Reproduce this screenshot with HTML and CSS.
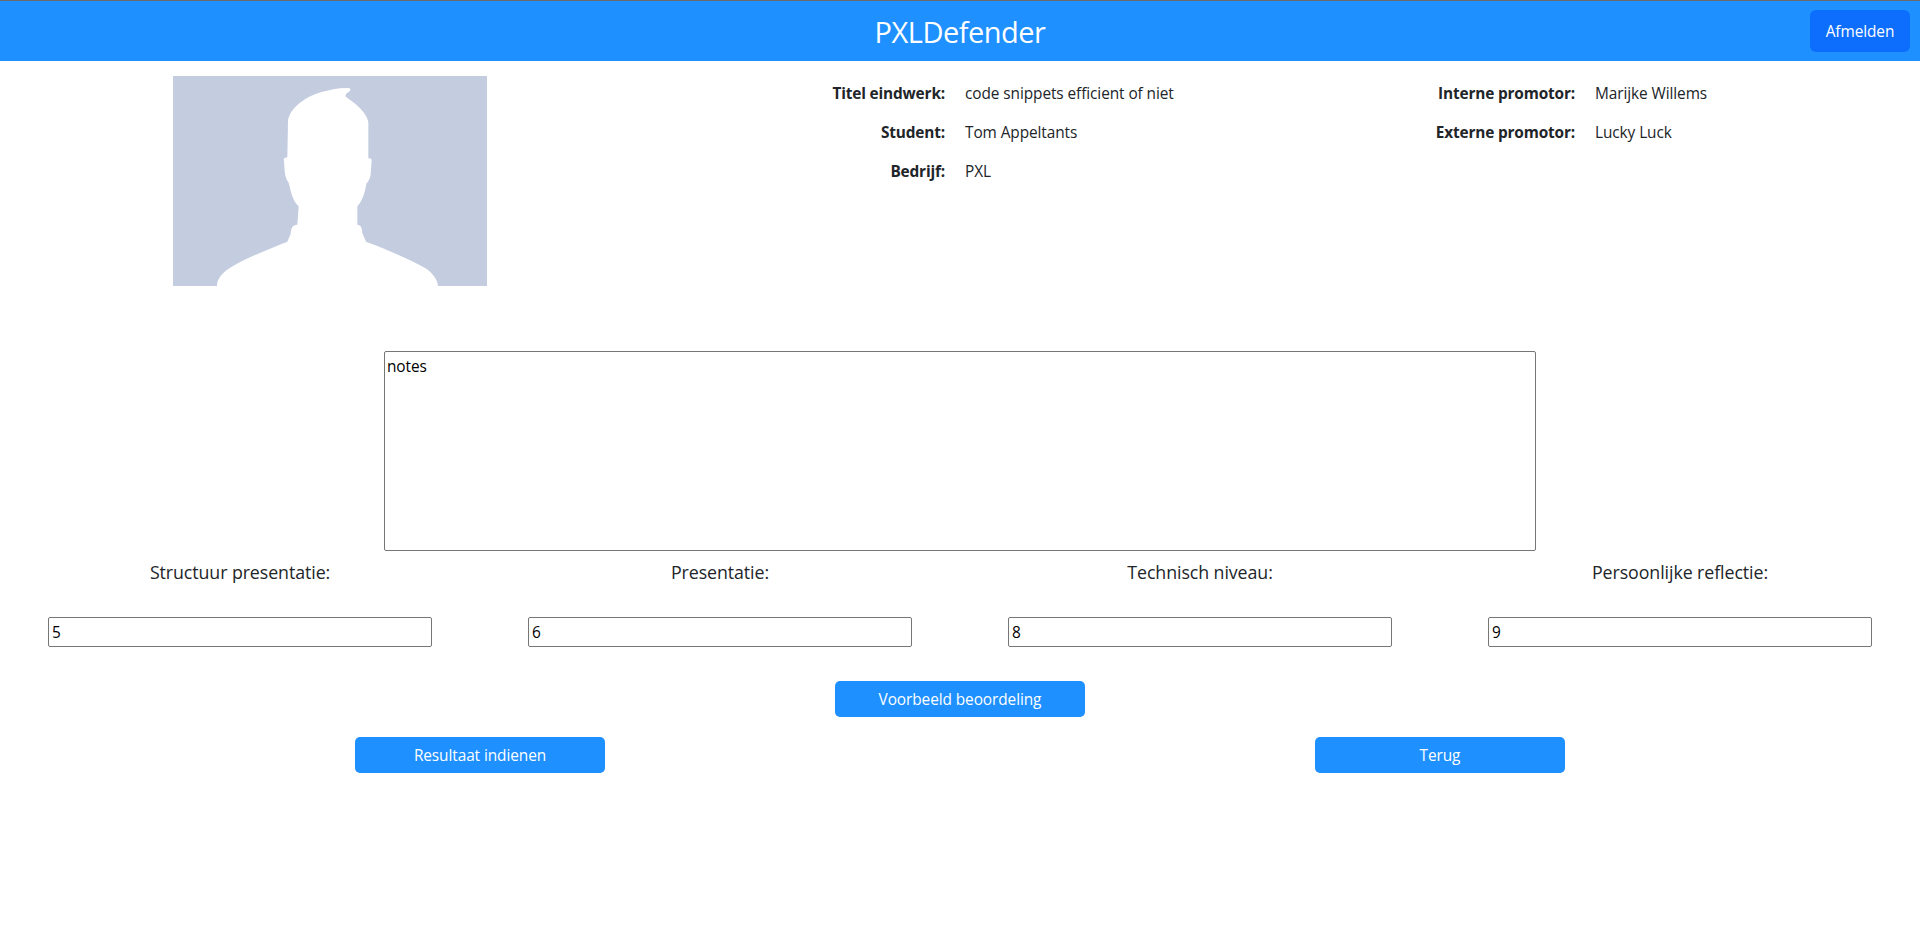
FILE: index.html
```html
<!DOCTYPE html>
<html lang="nl">
<head>
<meta charset="utf-8">
<title>PXLDefender</title>
<link rel="stylesheet" href="styles.css">
</head>
<body>
<header class="navbar">
  <h1 class="brand">PXLDefender</h1>
  <button class="logout" type="button">Afmelden</button>
</header>
<main>
  <section class="info">
    <div class="photo">
      <svg class="avatar" viewBox="39 48 942 630" role="img" aria-label="Student">
        <rect x="39" y="48" width="942" height="630" fill="#c4cce0"/>
        <path fill="#fff" d="M171 678C170 658 188 636 214 621C262 592 325 568 382 545L392 521C393 505 396 495 412 494L416 439C399 422 394 402 386 368C371 349 375 324 371 297Q374 292 382 292L384 184C388 145 436 110 482 97C508 89 538 83 565 84C572 85 573 89 569 93C563 99 554 102 557 110C587 130 622 159 625 187L625 295Q634 294 635 300L632 342C630 358 624 366 619 371C615 395 609 420 592 439L592 494C604 495 606 505 607 519L618 545C680 568 742 595 799 626C818 639 834 661 834 678Z"/>
      </svg>
    </div>
    <dl class="details">
      <dt>Titel eindwerk:</dt><dd>code snippets efficient of niet</dd>
      <dt>Student:</dt><dd>Tom Appeltants</dd>
      <dt>Bedrijf:</dt><dd>PXL</dd>
    </dl>
    <dl class="details">
      <dt>Interne promotor:</dt><dd>Marijke Willems</dd>
      <dt>Externe promotor:</dt><dd>Lucky Luck</dd>
    </dl>
  </section>
  <textarea class="notes" spellcheck="false">notes</textarea>
  <section class="scores">
    <div class="score"><label class="caption" for="s1">Structuur presentatie:</label><input class="field" id="s1" value="5"></div>
    <div class="score"><label class="caption" for="s2">Presentatie:</label><input class="field" id="s2" value="6"></div>
    <div class="score"><label class="caption" for="s3">Technisch niveau:</label><input class="field" id="s3" value="8"></div>
    <div class="score"><label class="caption" for="s4">Persoonlijke reflectie:</label><input class="field" id="s4" value="9"></div>
  </section>
  <div class="actions"><button class="action" type="button">Voorbeeld beoordeling</button></div>
  <div class="actions">
    <button class="action" type="button">Resultaat indienen</button>
    <button class="action" type="button">Terug</button>
  </div>
</main>
</body>
</html>
```

FILE: styles.css
```css
* { box-sizing: border-box; }
body {
  margin: 0;
  background: #fff;
  color: #212529;
  font-family: "Segoe UI", "Open Sans", "Noto Sans", sans-serif;
  font-size: 15.4px;
  line-height: 24px;
  letter-spacing: -0.08px;
}
button, input, textarea { font: inherit; letter-spacing: inherit; }
.navbar {
  display: grid;
  grid-template-columns: 1fr auto 1fr;
  align-items: center;
  height: 61px;
  border-top: 1px solid #6b6b6b;
  background: #1e90ff;
  color: #fff;
}
.brand {
  grid-column: 2;
  margin: 0;
  padding-top: 2px;
  font-size: 29px;
  font-weight: 400;
  line-height: 36px;
  letter-spacing: -0.5px;
}
.logout {
  justify-self: end;
  width: 100px;
  height: 42px;
  margin-right: 10px;
  padding: 2px 0 0;
  border: 0;
  border-radius: 6px;
  background: #0d6efd;
  color: #fff;
}
.info {
  display: grid;
  grid-template-columns: 660px 630px 630px;
  height: 290px;
  padding-top: 15px;
}
.photo { text-align: center; }
.avatar { width: 314px; height: 210px; }
.details {
  display: grid;
  grid-template-columns: 285px 1fr;
  grid-auto-rows: 24px;
  gap: 15px 20px;
  align-content: start;
  margin: 0;
  padding-top: 6px;
}
.details dt {
  font-weight: 700;
  text-align: right;
  letter-spacing: -0.16px;
}
.details dd { margin: 0; }
.notes {
  display: block;
  width: 1152px;
  height: 200px;
  margin: 0 auto;
  padding: 3px 2px 2px;
  border: 1px solid #767676;
  border-radius: 2px;
  resize: none;
  color: #000;
}
.scores {
  display: grid;
  grid-template-columns: repeat(4, 480px);
  padding-top: 8px;
}
.score {
  display: flex;
  flex-direction: column;
  align-items: center;
  gap: 31px;
}
.caption {
  font-size: 17.8px;
  line-height: 27px;
}
.field {
  width: 384px;
  height: 30px;
  padding: 2px 3px 1px;
  border: 1px solid #767676;
  border-radius: 2px;
  color: #000;
}
.actions {
  display: flex;
  justify-content: space-around;
  padding-top: 20px;
}
.scores + .actions { padding-top: 34px; }
.action {
  width: 250px;
  height: 36px;
  padding: 2px 0 0;
  border: 0;
  border-radius: 5px;
  background: #1e90ff;
  color: #fff;
}
```
